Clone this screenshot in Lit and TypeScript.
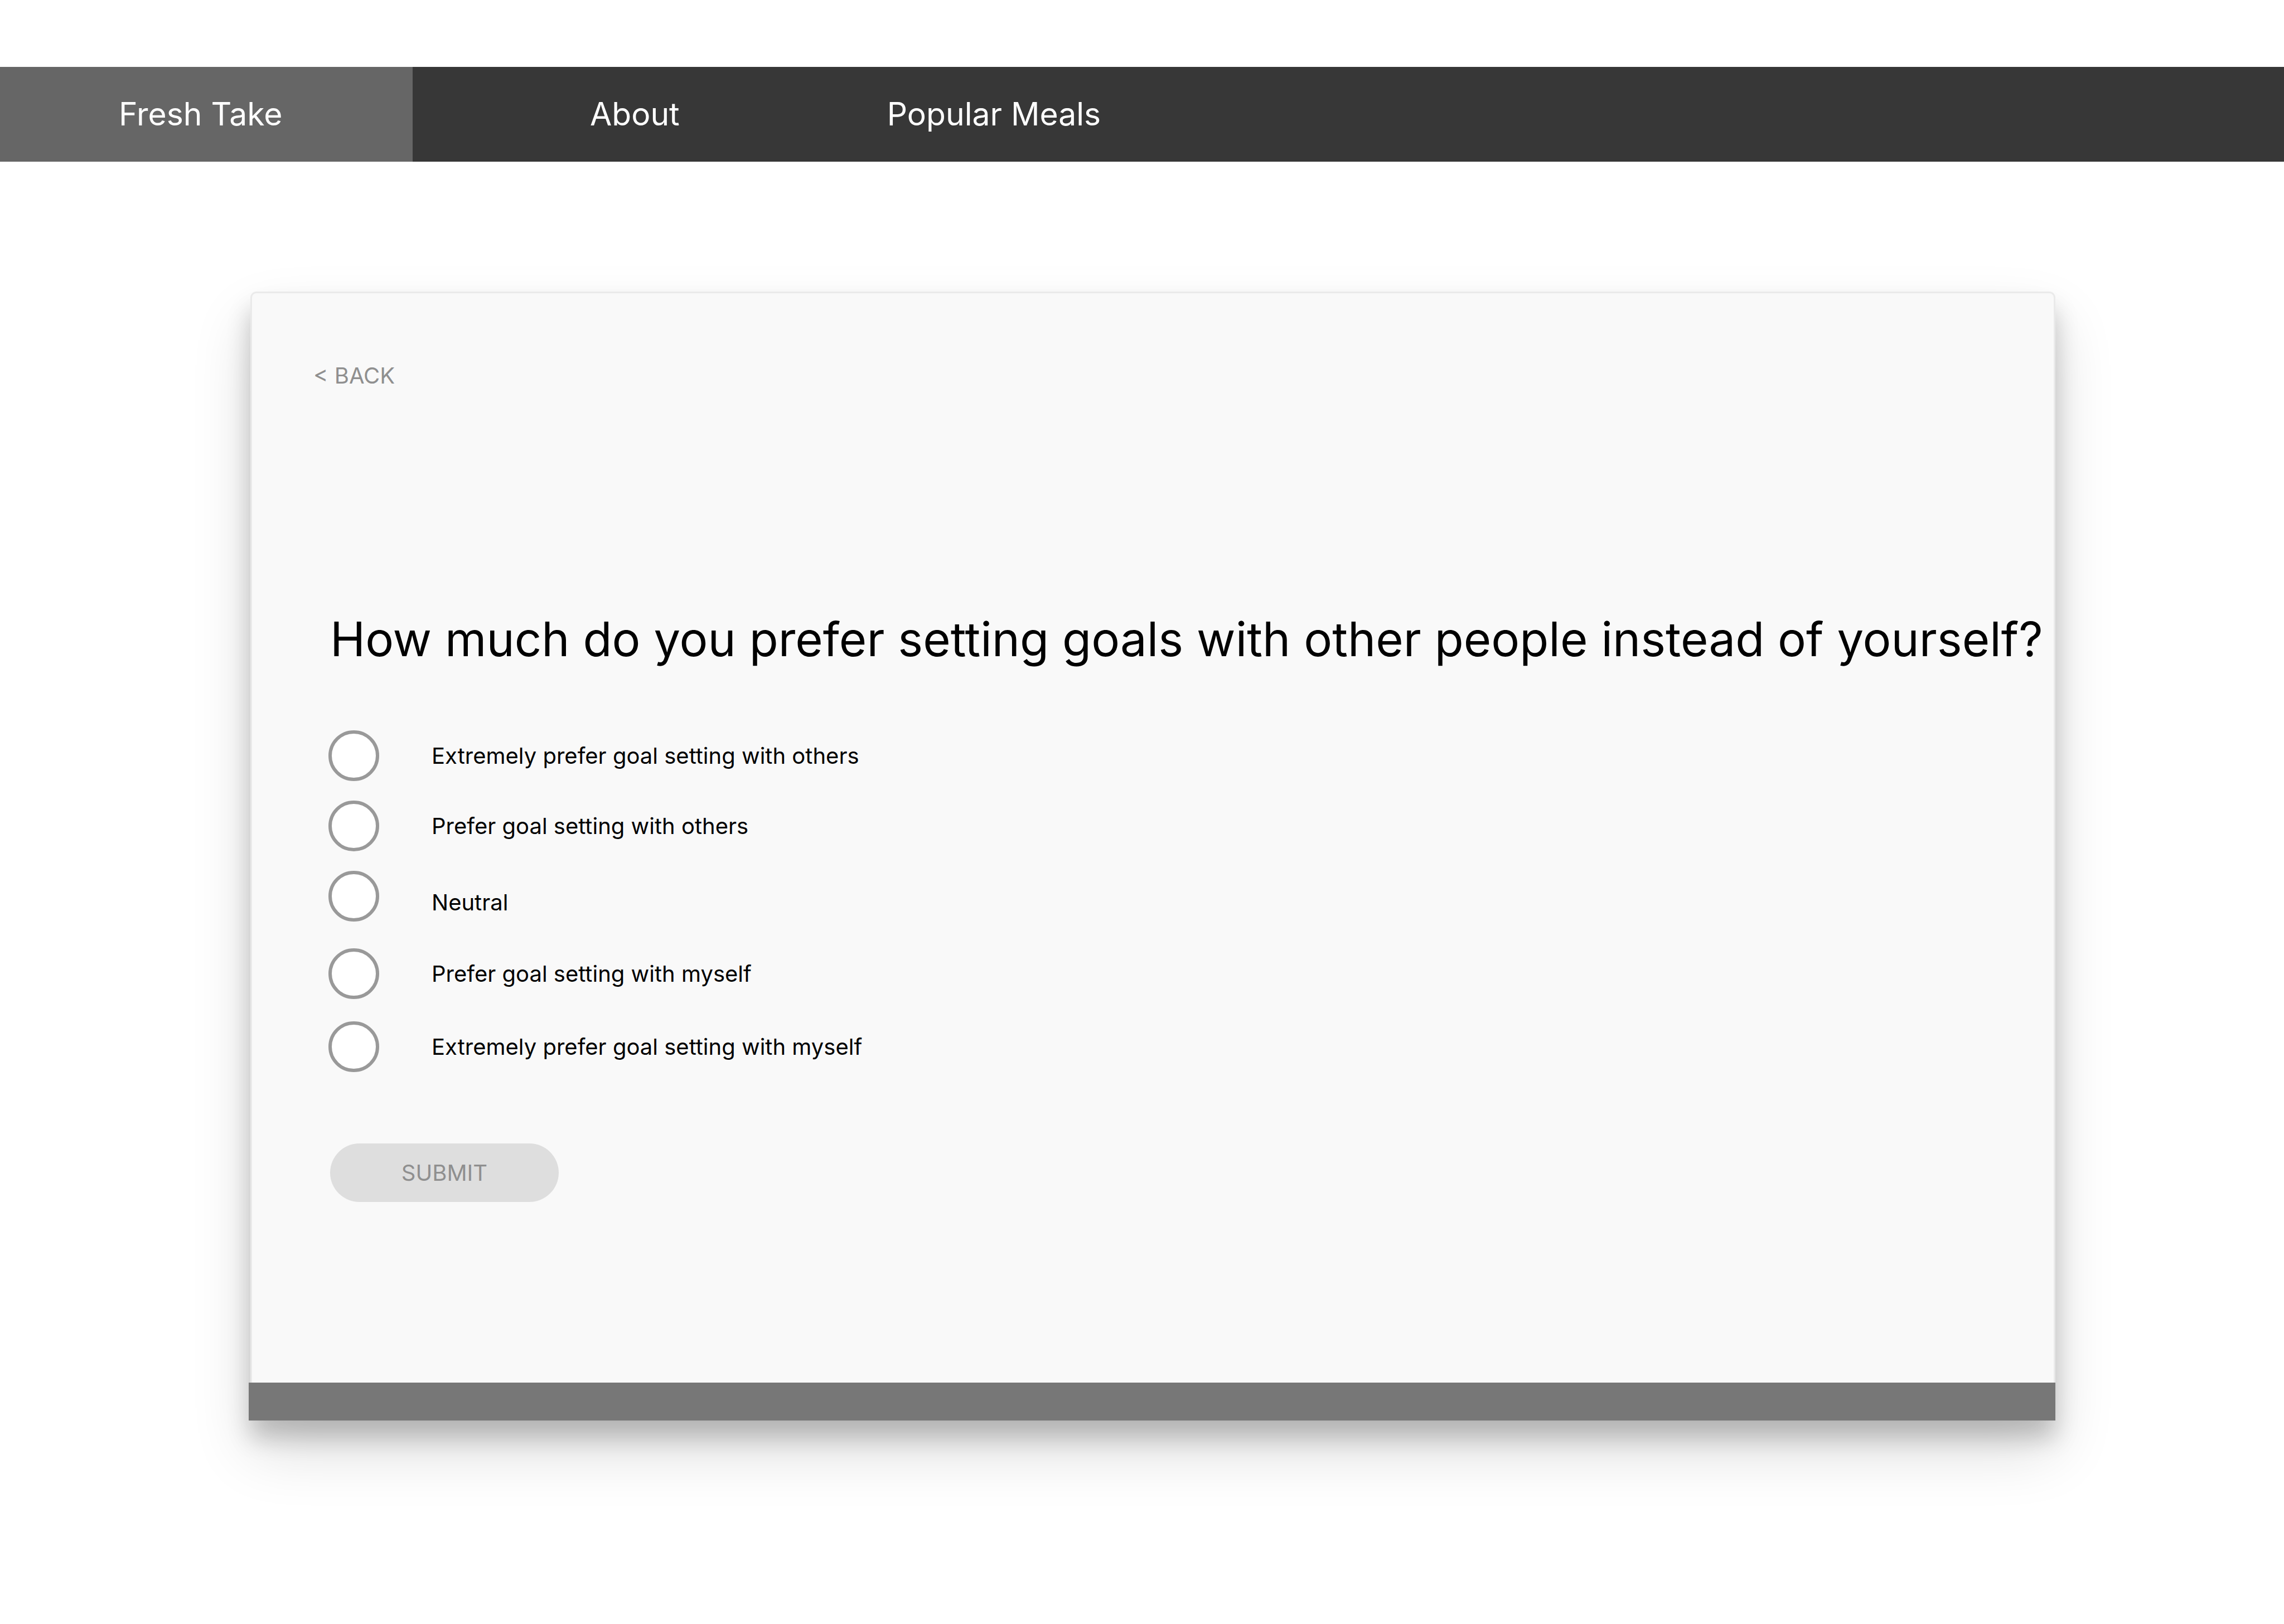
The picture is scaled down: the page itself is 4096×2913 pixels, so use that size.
import { LitElement, html, css } from "lit";
import { customElement, state } from "lit/decorators.js";
import { classMap } from "lit/directives/class-map.js";

interface Choice {
  id: string;
  label: string;
  low?: boolean;
  after?: "small" | "large";
}

const CHOICES: Choice[] = [
  { id: "others-most", label: "Extremely prefer goal setting with others" },
  { id: "others", label: "Prefer goal setting with others" },
  { id: "neutral", label: "Neutral", low: true, after: "large" },
  { id: "myself", label: "Prefer goal setting with myself", after: "small" },
  { id: "myself-most", label: "Extremely prefer goal setting with myself" },
];

@customElement("site-nav")
export class SiteNav extends LitElement {
  static styles = css`
    :host {
      display: block;
    }
    .bar {
      display: flex;
      align-items: stretch;
      height: 170px;
      background: #373737;
    }
    .link {
      display: flex;
      align-items: center;
      color: #ffffff;
      font-size: 57px;
      line-height: 68px;
      font-weight: 400;
      text-decoration: none;
      white-space: nowrap;
    }
    .brand {
      box-sizing: border-box;
      width: 740px;
      padding-left: 213px;
      background: #666666;
    }
    .links {
      display: flex;
      gap: 372px;
      padding-left: 318px;
    }
  `;

  render() {
    return html`
      <nav class="bar" aria-label="Main">
        <a class="link brand" href="#home">Fresh Take</a>
        <div class="links">
          <a class="link" href="#about">About</a>
          <a class="link" href="#popular">Popular Meals</a>
        </div>
      </nav>
    `;
  }
}

@customElement("question-card")
export class QuestionCard extends LitElement {
  @state() private selected = "";

  static styles = css`
    :host {
      display: block;
    }
    .card {
      box-sizing: border-box;
      border: 3px solid #eaeaea;
      border-bottom: 0;
      border-radius: 11px 11px 0 0;
      background: #f9f9f9;
      box-shadow: 0 54px 108px rgba(0, 0, 0, 0.14),
        0 31px 43px rgba(0, 0, 0, 0.2);
    }
    .body {
      padding: 114px 0 324px 110px;
    }
    .back {
      display: block;
      width: max-content;
      color: #8f8f8f;
      font-size: 40px;
      line-height: 68px;
      text-decoration: none;
    }
    .form {
      padding: 387px 0 0 27px;
    }
    .group {
      margin: 0;
      padding: 0;
      border: 0;
      min-width: 0;
    }
    .question {
      padding: 0 0 0 3px;
      color: #000000;
      font-size: 85px;
      line-height: 104px;
      font-weight: 400;
      font-variant-ligatures: none;
      white-space: nowrap;
    }
    .choices {
      display: flex;
      flex-direction: column;
      gap: 35px;
      padding-top: 111px;
    }
    .choice {
      display: flex;
      align-items: center;
      gap: 94px;
      color: #000000;
      font-size: 40px;
      line-height: 68px;
    }
    .low {
      align-items: flex-end;
    }
    .after-small {
      margin-bottom: 5px;
    }
    .after-large {
      margin-bottom: 13px;
    }
    .radio {
      appearance: none;
      box-sizing: border-box;
      flex: none;
      width: 91px;
      height: 91px;
      margin: 0;
      border: 6px solid #999999;
      border-radius: 50%;
      background: #ffffff;
    }
    .radio:checked {
      background: radial-gradient(#777777 50%, #ffffff 52%);
    }
    .submit {
      display: block;
      width: 410px;
      height: 105px;
      margin: 128px 0 0 3px;
      padding: 0;
      border: 0;
      border-radius: 53px;
      background: #dedede;
      color: #8f8f8f;
      font-family: inherit;
      font-size: 40px;
      line-height: 68px;
    }
    .foot {
      height: 68px;
      margin: 0 -3px 0 -6px;
      background: #777777;
    }
  `;

  render() {
    return html`
      <section class="card">
        <div class="body">
          <a class="back" href="#back">&lt; BACK</a>
          <form class="form" @submit=${(e: Event) => e.preventDefault()}>
            <fieldset class="group">
              <legend class="question">
                How much do you prefer setting goals with other people instead
                of yourself?
              </legend>
              <div class="choices">
                ${CHOICES.map(
                  (c) => html`
                    <label
                      class=${classMap({
                        choice: true,
                        low: !!c.low,
                        "after-small": c.after === "small",
                        "after-large": c.after === "large",
                      })}
                      for=${c.id}
                    >
                      <input
                        class="radio"
                        type="radio"
                        name="goal"
                        id=${c.id}
                        .checked=${this.selected === c.id}
                        @change=${() => (this.selected = c.id)}
                      />
                      <span>${c.label}</span>
                    </label>
                  `
                )}
              </div>
            </fieldset>
            <button class="submit" type="submit">SUBMIT</button>
          </form>
        </div>
        <div class="foot"></div>
      </section>
    `;
  }
}

@customElement("app-root")
export class AppRoot extends LitElement {
  static styles = css`
    :host {
      display: block;
      box-sizing: border-box;
      min-height: 100vh;
      padding-top: 120px;
      background: #ffffff;
      font-family: Inter, "Liberation Sans", sans-serif;
    }
    .main {
      padding: 233px 410px 120px 449px;
    }
  `;

  render() {
    return html`
      <site-nav></site-nav>
      <main class="main">
        <question-card></question-card>
      </main>
    `;
  }
}
